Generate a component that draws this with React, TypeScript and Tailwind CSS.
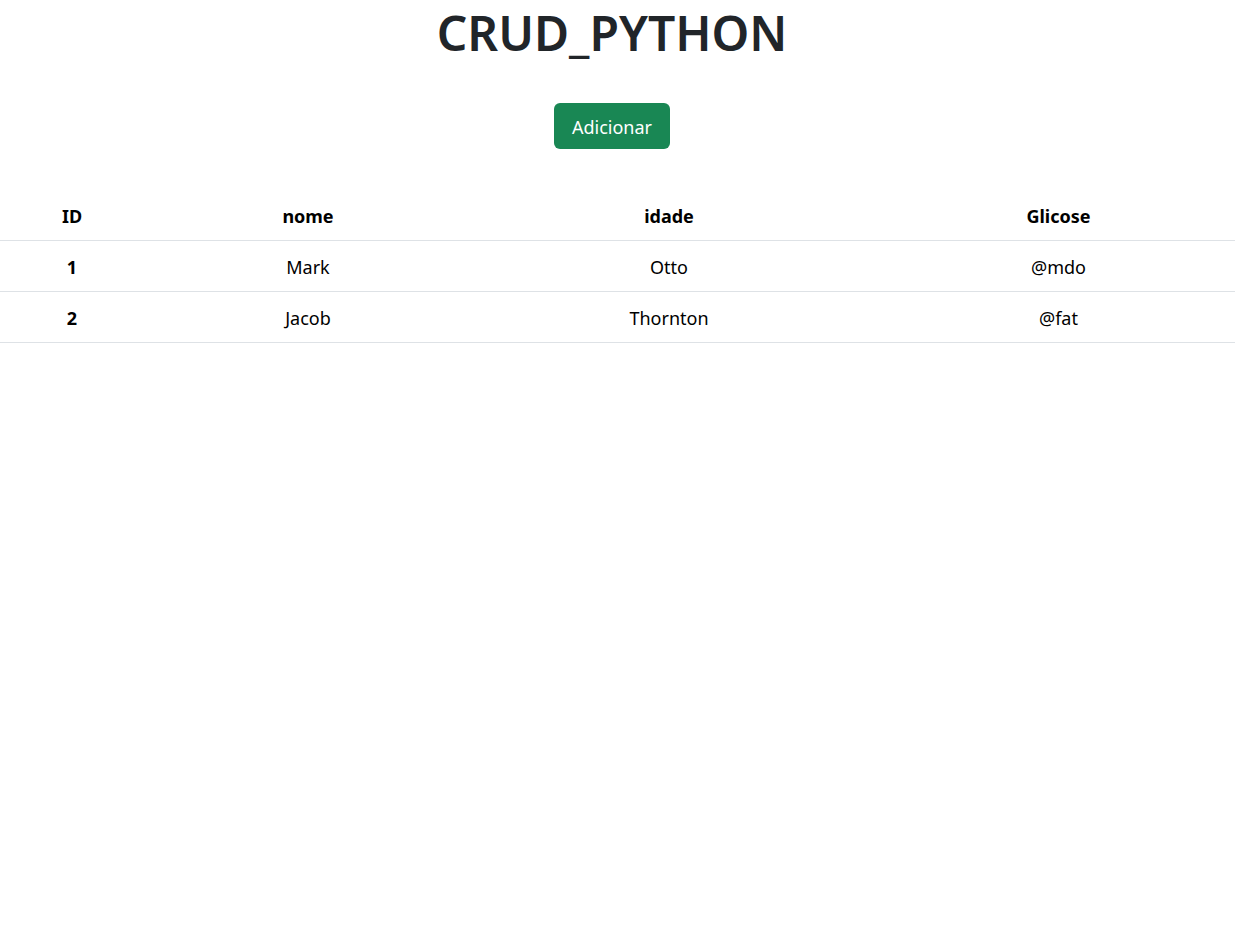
import React from "react"

const rows = [
  { id: 1, nome: "Mark", idade: "Otto", glicose: "@mdo" },
  { id: 2, nome: "Jacob", idade: "Thornton", glicose: "@fat" },
]

export default function App() {
  return (
    <div className="min-h-screen bg-white font-['Noto_Sans',sans-serif] text-black">
      <h1 className="h-[61px] pr-[11px] pt-[4px] text-center text-[48px] font-semibold leading-[1.2] text-[#212529]">CRUD_PYTHON</h1>

      <div className="mt-[42px] flex justify-center pr-[11px]">
        <button
          type="button"
          className="h-[46px] w-[116px] rounded-[6px] bg-[#198754] pt-[3px] text-[18px] text-white"
        >
          Adicionar
        </button>
      </div>

      <table className="mt-[43px] w-full table-fixed border-collapse text-center text-[18px]">
        <colgroup>
          <col className="w-[144px]" />
          <col className="w-[328px]" />
          <col className="w-[394px]" />
          <col />
        </colgroup>
        <thead>
          <tr className="h-[48px] border-b border-[#dee2e6]">
            <th className="pt-[2px] font-bold">ID</th>
            <th className="pt-[2px] font-bold">nome</th>
            <th className="pt-[2px] font-bold">idade</th>
            <th className="pl-4 pt-[2px] font-bold">Glicose</th>
          </tr>
        </thead>
        <tbody>
          {rows.map((r) => (
            <tr key={r.id} className="h-[51px] border-b border-[#dee2e6]">
              <th className="pt-[3px] font-bold">{r.id}</th>
              <td className="pt-[3px]">{r.nome}</td>
              <td className="pt-[3px]">{r.idade}</td>
              <td className="pl-4 pt-[3px]">{r.glicose}</td>
            </tr>
          ))}
        </tbody>
      </table>
    </div>
  )
}
